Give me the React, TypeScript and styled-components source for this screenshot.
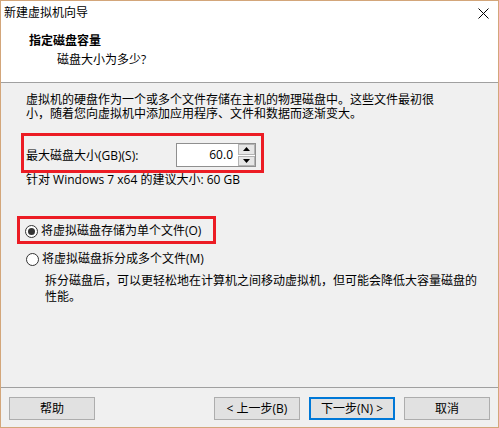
import React from 'react';
import styled, { createGlobalStyle } from 'styled-components';

const Global = createGlobalStyle`
  html, body { margin: 0; padding: 0; background: #fff; }
  body {
    font-family: "Open Sans", "Noto Sans CJK SC", sans-serif;
    font-size: 12px;
    color: #000;
  }
  * { box-sizing: border-box; }
`;

const Window = styled.div`
  width: 499px;
  height: 428px;
  border: 1px solid #d3a67a;
  display: flex;
  flex-direction: column;
  background: #f0f0f0;
`;

const TitleBar = styled.div`
  height: 24px;
  background: #fff;
  display: flex;
  align-items: center;
  justify-content: space-between;
  padding: 0 9px 0 3px;
  line-height: 16px;
`;

const Header = styled.div`
  height: 58px;
  background: #fff;
  border-bottom: 1px solid #a0a0a0;
  padding: 8px 0 0 28px;
`;

const HeaderTitle = styled.div`
  font-weight: 700;
  line-height: 16px;
`;

const HeaderSub = styled.div`
  line-height: 16px;
  margin-top: 3px;
  padding-left: 28px;
`;

const Body = styled.div`
  flex: 1;
  padding-top: 10px;
  display: flex;
  flex-direction: column;
  align-items: flex-start;
`;

const Text = styled.div<{ $indent: number; $width?: number; $lh?: number; $top?: number }>`
  margin-left: ${p => p.$indent}px;
  margin-top: ${p => p.$top ?? 0}px;
  width: ${p => (p.$width ? `${p.$width}px` : 'auto')};
  line-height: ${p => p.$lh ?? 14}px;
`;

const Highlight = styled.div<{ $left: number; $top: number; $w: number; $h: number }>`
  margin-left: ${p => p.$left}px;
  margin-top: ${p => p.$top}px;
  width: ${p => p.$w}px;
  height: ${p => p.$h}px;
  border: 3px solid #ec1c24;
  display: flex;
  align-items: center;
`;

const SizeBox = styled(Highlight)`
  justify-content: space-between;
  padding: 4px 5px 0 2px;
`;

const RadioBox = styled(Highlight)`
  padding: 2px 0 0 5px;
`;

const Spin = styled.div`
  width: 80px;
  height: 24px;
  border: 1px solid #8f8f8f;
  background: #fff;
  display: flex;
`;

const SpinValue = styled.div`
  flex: 1;
  text-align: right;
  padding-right: 5px;
  line-height: 21px;
`;

const SpinButtons = styled.div`
  width: 17px;
  display: flex;
  flex-direction: column;
  gap: 1px;
`;

const SpinButton = styled.div`
  flex: 1;
  background: #e6e6e6;
  border: 1px solid #b4b4b4;
  display: flex;
  align-items: center;
  justify-content: center;
`;

const RadioRow = styled.div<{ $indent?: number; $top?: number }>`
  display: flex;
  align-items: center;
  gap: 3px;
  margin-left: ${p => p.$indent ?? 0}px;
  margin-top: ${p => p.$top ?? 0}px;
  line-height: 16px;
`;

const RadioCircle = styled.span<{ $checked?: boolean }>`
  width: 13px;
  height: 13px;
  border-radius: 50%;
  border: 1px solid #333;
  background: #fff;
  display: inline-flex;
  align-items: center;
  justify-content: center;
  flex: none;
  &::after {
    content: '';
    width: 7px;
    height: 7px;
    border-radius: 50%;
    background: #333;
    display: ${p => (p.$checked ? 'block' : 'none')};
  }
`;

const Footer = styled.div`
  height: 40px;
  border-top: 1px solid #a0a0a0;
  display: flex;
  align-items: flex-start;
  padding: 9px 8px 0 8px;
  gap: 9px;
`;

const Spacer = styled.div`
  flex: 1;
`;

const Button = styled.div<{ $primary?: boolean }>`
  width: 86px;
  height: 23px;
  background: #e1e1e1;
  border: ${p => (p.$primary ? '2px solid #0078d7' : '1px solid #adadad')};
  display: flex;
  align-items: center;
  justify-content: center;
  line-height: 16px;
`;

const Tri = ({ up }: { up?: boolean }) => (
  <svg width="7" height="4" viewBox="0 0 7 4">
    <path d={up ? 'M0 4 L3.5 0 L7 4 Z' : 'M0 0 L3.5 4 L7 0 Z'} fill="#000" />
  </svg>
);

export default function App() {
  return (
    <>
      <Global />
      <Window>
        <TitleBar>
          <span>新建虚拟机向导</span>
          <svg width="11" height="11" viewBox="0 0 11 11">
            <path d="M0.5 0.5 L10.5 10.5 M10.5 0.5 L0.5 10.5" stroke="#000" strokeWidth="1" />
          </svg>
        </TitleBar>
        <Header>
          <HeaderTitle>指定磁盘容量</HeaderTitle>
          <HeaderSub>磁盘大小为多少?</HeaderSub>
        </Header>
        <Body>
          <Text $indent={25} $width={412}>
            虚拟机的硬盘作为一个或多个文件存储在主机的物理磁盘中。这些文件最初很小，随着您向虚拟机中添加应用程序、文件和数据而逐渐变大。
          </Text>
          <SizeBox $left={20} $top={12} $w={243} $h={40}>
            <span>最大磁盘大小(GB)(S):</span>
            <Spin>
              <SpinValue>60.0</SpinValue>
              <SpinButtons>
                <SpinButton><Tri up /></SpinButton>
                <SpinButton><Tri /></SpinButton>
              </SpinButtons>
            </Spin>
          </SizeBox>
          <Text $indent={25} $top={0}>针对 Windows 7 x64 的建议大小: 60 GB</Text>
          <RadioBox $left={16} $top={29} $w={199} $h={28}>
            <RadioRow>
              <RadioCircle $checked />
              <span>将虚拟磁盘存储为单个文件(O)</span>
            </RadioRow>
          </RadioBox>
          <RadioRow $indent={25} $top={7}>
            <RadioCircle />
            <span>将虚拟磁盘拆分成多个文件(M)</span>
          </RadioRow>
          <Text $indent={44} $width={436} $lh={16} $top={6}>
            拆分磁盘后，可以更轻松地在计算机之间移动虚拟机，但可能会降低大容量磁盘的性能。
          </Text>
        </Body>
        <Footer>
          <Button>帮助</Button>
          <Spacer />
          <Button>&lt; 上一步(B)</Button>
          <Button $primary>下一步(N) &gt;</Button>
          <Button>取消</Button>
        </Footer>
      </Window>
    </>
  );
}
